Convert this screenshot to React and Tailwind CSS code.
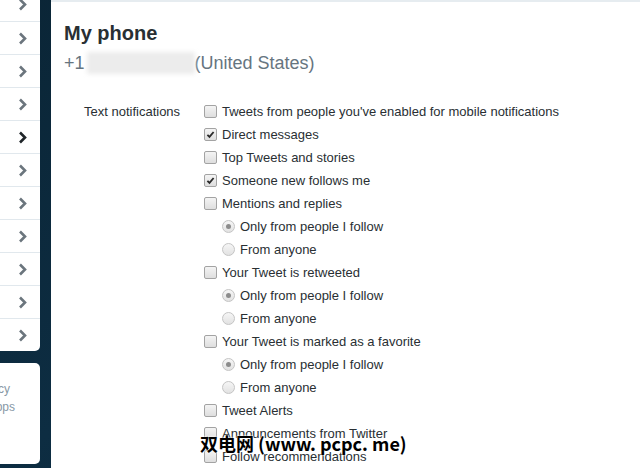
const Chevron = ({ active }) => (
  <svg width="9" height="13" viewBox="0 0 9 13" className="block">
    <polyline
      points="2,1.5 7,6.5 2,11.5"
      fill="none"
      stroke={active ? "#1f2529" : "#6b757d"}
      strokeWidth="2.6"
    />
  </svg>
);

const Checkbox = ({ checked }) => (
  <span className="w-[13px] h-[13px] shrink-0 rounded-[2px] border border-[#a3a3a3] bg-gradient-to-b from-[#f4f4f4] to-[#dedede] flex items-center justify-center">
    {checked && (
      <svg width="9" height="9" viewBox="0 0 9 9">
        <polyline points="1.4,4.8 3.5,6.9 7.6,2" fill="none" stroke="#2a2a2a" strokeWidth="1.8" />
      </svg>
    )}
  </span>
);

const Radio = ({ checked }) => (
  <span className="w-[13px] h-[13px] shrink-0 rounded-full border border-[#c4c4c4] bg-gradient-to-b from-[#f6f6f6] to-[#e2e2e2] flex items-center justify-center">
    {checked && <span className="w-[5px] h-[5px] rounded-full bg-[#8c8c8c]" />}
  </span>
);

const App = () => {
  const rows = [
    { type: "check", label: "Tweets from people you've enabled for mobile notifications" },
    { type: "check", label: "Direct messages", checked: true },
    { type: "check", label: "Top Tweets and stories" },
    { type: "check", label: "Someone new follows me", checked: true },
    { type: "check", label: "Mentions and replies" },
    { type: "radio", label: "Only from people I follow", checked: true },
    { type: "radio", label: "From anyone" },
    { type: "check", label: "Your Tweet is retweeted" },
    { type: "radio", label: "Only from people I follow", checked: true },
    { type: "radio", label: "From anyone" },
    { type: "check", label: "Your Tweet is marked as a favorite" },
    { type: "radio", label: "Only from people I follow", checked: true },
    { type: "radio", label: "From anyone" },
    { type: "check", label: "Tweet Alerts" },
    { type: "check", label: "Announcements from Twitter" },
    { type: "check", label: "Follow recommendations" },
  ];

  return (
    <div className="relative h-[468px] w-[640px] overflow-hidden bg-gradient-to-br from-[#0a2536] via-[#0d2d42] to-[#082234] flex font-['Liberation_Sans',Arial,sans-serif]">
      {/* SIDEBAR */}
      <div className="w-[40px] shrink-0 flex flex-col">
        <div className="-mt-[12px] bg-white rounded-br-[5px] overflow-hidden">
          {Array.from({ length: 11 }).map((_, i) => (
            <div
              key={i}
              className={`h-[33px] flex items-center justify-end pr-[13px] ${
                i > 0 ? "border-t border-[#e1e8ed]" : ""
              }`}
            >
              <Chevron active={i === 4} />
            </div>
          ))}
        </div>
        <div className="mt-[12px] h-[101px] bg-white rounded-r-[5px] overflow-hidden pt-[17px] text-[12px] leading-[18px] text-[#8899a6]">
          <div className="flex justify-end whitespace-nowrap pr-[30px]">Terms Privacy</div>
          <div className="flex justify-end whitespace-nowrap pr-[25px]">Status Apps</div>
        </div>
      </div>

      {/* MAIN */}
      <div className="ml-[11px] flex-1 bg-white border-t-2 border-[#e6ecf0] pl-[13px]">
        <h1 className="pt-[19px] text-[20px] leading-[24px] font-bold text-[#292f33]">My phone</h1>
        <div className="mt-[7px] flex items-center text-[18px] leading-[22px] text-[#66757f]">
          <span>+1</span>
          <span className="ml-[2px] w-[108px] h-[22px] bg-[#ececec] blur-[2px]" />
          <span>(United States)</span>
        </div>

        <div className="mt-[26px] ml-[20px] flex text-[13px] text-[#292f33]">
          <div className="w-[120px] shrink-0 h-[23px] leading-[23px]">Text notifications</div>
          <div className="flex flex-col">
            {rows.map((row, i) => (
              <div
                key={i}
                className={`h-[23px] flex items-center gap-[5px] whitespace-nowrap ${
                  row.type === "radio" ? "pl-[18px]" : ""
                }`}
              >
                {row.type === "check" ? <Checkbox checked={row.checked} /> : <Radio checked={row.checked} />}
                <span>{row.label}</span>
              </div>
            ))}
          </div>
        </div>
      </div>

      {/* WATERMARK */}
      <div className="absolute left-[200px] top-[430px] text-[18px] leading-[26px] font-bold text-black font-['Noto_Sans_CJK_SC',sans-serif] [text-shadow:0_0_2px_#fff,0_0_2px_#fff]">
        双电网 (www. pcpc. me)
      </div>
    </div>
  );
};

export default App;
